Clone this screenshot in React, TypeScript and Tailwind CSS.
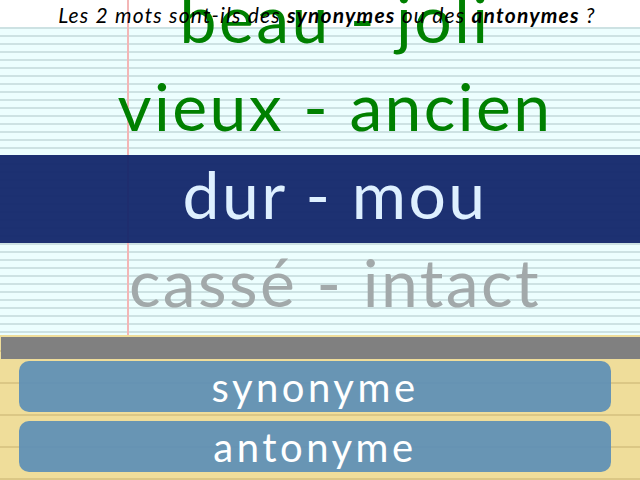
import { useState } from "react"

const pairs = [
    { text: "beau - joli", state: "done" },
    { text: "vieux - ancien", state: "done" },
    { text: "dur - mou", state: "current" },
    { text: "cassé - intact", state: "next" },
]

function rowClass(state: string) {
    if (state === "done") {
        return "text-[#008000]"
    } else if (state === "current") {
        return "bg-[#12266a]/95 text-[#def0ff]"
    } else {
        return "text-[#a2a9aa]"
    }
}

export default function App() {
    const [answer, setAnswer] = useState("")

    return (
        <div className="flex flex-col w-[640px] h-[480px] overflow-hidden bg-white font-['Lato','DejaVu_Sans',sans-serif]">
            {/* cahier */}
            <div className="relative h-[335px] overflow-hidden bg-white">
                <div className="absolute left-0 right-0 top-[27px] bottom-0 bg-[#ecfefe] bg-[repeating-linear-gradient(to_bottom,#cde2e3_0px,#cde2e3_2px,transparent_2px,transparent_8px)]" />
                <div className="absolute top-0 bottom-0 left-[127px] w-[2px] bg-[#f3b6b6]" />

                <div className="relative flex flex-col -mt-[21px]">
                    {pairs.map((pair) => (
                        <div key={pair.text} className={"flex h-[88px] items-center justify-center pl-[30px] text-[66px] leading-none tracking-[2.4px] " + rowClass(pair.state)}>
                            <span className="-mt-[11px]">{pair.text}</span>
                        </div>
                    ))}
                </div>

                <p className="absolute top-0 left-0 right-0 pt-[3px] pl-[14px] text-center text-[21px] leading-[24px] tracking-[1.2px] italic text-black">
                    Les 2 mots sont-ils des <b>synonymes</b> ou des <b>antonymes</b> ?
                </p>
            </div>

            {/* réponses */}
            <div className="flex flex-col flex-1 pl-[1px] pt-[2px] bg-[#efdd9a] bg-[repeating-linear-gradient(to_bottom,transparent_0px,transparent_15px,#dbc785_15px,#dbc785_17px,transparent_17px,transparent_32px)]">
                <div className="h-[22px] bg-[#808080]" />
                <div className="flex flex-col gap-[9px] pt-[2px] pl-[18px] pr-[29px]">
                    {["synonyme", "antonyme"].map((label) => (
                        <button
                            key={label}
                            onClick={() => setAnswer(label)}
                            className={"flex h-[51px] items-center justify-center rounded-[10px] bg-[#6090b5]/95 text-[40px] leading-none tracking-[3.5px] text-white " + (answer === label ? "ring-2 ring-white" : "")}
                        >
                            <span className="mt-[1px]">{label}</span>
                        </button>
                    ))}
                </div>
            </div>
        </div>
    )
}
